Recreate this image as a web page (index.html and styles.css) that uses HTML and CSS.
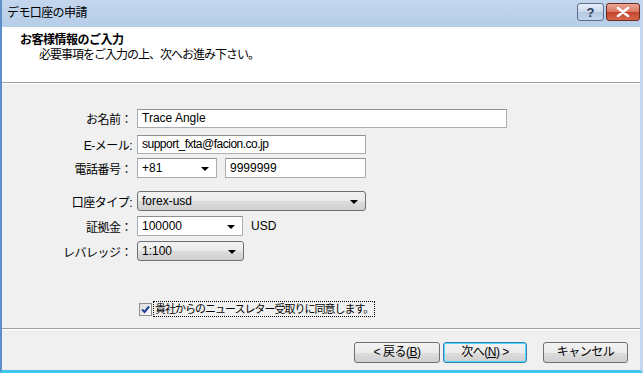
FILE: index.html
```html
<!DOCTYPE html>
<html lang="ja">
<head>
    <meta charset="UTF-8">
    <title>デモ口座の申請</title>
    <link rel="stylesheet" href="styles.css">
</head>
<body>
    <div class="window">
        <div class="titlebar">
            <span class="title">デモ口座の申請</span>
            <div class="caption-buttons">
                <span class="cap-btn help">?</span>
                <span class="cap-btn close">
                    <svg viewBox="0 0 14 10" width="14" height="10"><path d="M2 1 L12 9 M12 1 L2 9" stroke="#fff" stroke-width="2.6" stroke-linecap="round"/></svg>
                </span>
            </div>
        </div>

        <div class="header">
            <h1 class="header-title">お客様情報のご入力</h1>
            <p class="header-sub">必要事項をご入力の上、次へお進み下さい。</p>
        </div>

        <div class="content">
            <div class="form">
                <div class="row r-name">
                    <label class="label">お名前：</label>
                    <div class="textbox w-name">Trace Angle</div>
                </div>
                <div class="row r-mail">
                    <label class="label">E-メール:</label>
                    <div class="textbox w-mail">support_fxta@facion.co.jp</div>
                </div>
                <div class="row r-tel">
                    <label class="label">電話番号：</label>
                    <div class="combo w-code">+81<span class="arrow"></span></div>
                    <div class="textbox w-tel">9999999</div>
                </div>
                <div class="row r-type">
                    <label class="label">口座タイプ:</label>
                    <div class="dropdown w-type">forex-usd<span class="arrow"></span></div>
                </div>
                <div class="row r-dep">
                    <label class="label">証拠金：</label>
                    <div class="combo w-dep">100000<span class="arrow"></span></div>
                    <span class="unit">USD</span>
                </div>
                <div class="row r-lev">
                    <label class="label">レバレッジ：</label>
                    <div class="dropdown w-lev">1:100<span class="arrow"></span></div>
                </div>
            </div>

            <div class="check-row">
                <span class="checkbox">
                    <svg viewBox="0 0 9 9" width="9" height="9"><path d="M1 4.5 L3.5 7 L8 1.5" fill="none" stroke="#1c3f94" stroke-width="2"/></svg>
                </span>
                <span class="check-label">貴社からのニュースレター受取りに同意します。</span>
            </div>
        </div>

        <div class="footer">
            <button class="btn back">&lt; 戻る(<u>B</u>)</button>
            <button class="btn next">次へ(<u>N</u>) &gt;</button>
            <button class="btn cancel">キャンセル</button>
        </div>
    </div>
</body>
</html>
```

FILE: styles.css
```css
* {
    margin: 0;
    padding: 0;
    box-sizing: border-box;
}

body {
    width: 643px;
    height: 373px;
    overflow: hidden;
    font-family: "Liberation Sans", "Noto Sans CJK JP", sans-serif;
    font-size: 12px;
    color: #000;
    background: #f0f0f0;
}

.window {
    width: 643px;
    height: 373px;
    display: flex;
    flex-direction: column;
    border-left: 2px solid #5f8fc8;
    border-right: 3px solid #c3d7ee;
    border-bottom: 3px solid #3ec6ee;
    background: #f0f0f0;
}

/* title bar */
.titlebar {
    height: 27px;
    display: flex;
    align-items: flex-start;
    justify-content: space-between;
    background: linear-gradient(#c3d6ed, #b6cde8);
}

.title {
    padding: 5px 0 0 5px;
    font-size: 12px;
    line-height: 16px;
    letter-spacing: -0.6px;
}

.caption-buttons {
    display: flex;
    gap: 2px;
    padding: 3px 0 0 0;
}

.cap-btn {
    height: 18px;
    border: 1px solid #5c6f8a;
    border-radius: 3px;
    display: flex;
    align-items: center;
    justify-content: center;
}

.help {
    width: 27px;
    background: linear-gradient(#e5eef8 0%, #cbdaec 50%, #b3c7e0 51%, #c4d6ec 100%);
    color: #2b3e5a;
    font-weight: bold;
    font-size: 13px;
}

.close {
    width: 34px;
    border-color: #6d2a1f;
    background: linear-gradient(#e9a796 0%, #d8765f 50%, #c2442b 51%, #d4664c 100%);
}

/* header */
.header {
    height: 56px;
    background: #fff;
    border-bottom: 1px solid #a0a0a0;
    box-shadow: 0 1px 0 #fff;
    padding: 6px 0 0 18px;
}

.header-title {
    font-size: 12px;
    font-weight: bold;
    line-height: 15px;
    letter-spacing: -0.5px;
}

.header-sub {
    font-size: 12px;
    line-height: 15px;
    padding-left: 19px;
    letter-spacing: -1px;
}

/* form */
.content {
    flex: 1;
    padding-top: 25px;
}

.form {
    display: flex;
    flex-direction: column;
}

.row {
    display: flex;
    align-items: center;
    height: 20px;
    gap: 5px;
}

.r-mail { margin-top: 6px; }
.r-tel { margin-top: 4px; }
.r-type { margin-top: 13px; }
.r-dep { margin-top: 5px; }
.r-lev { margin-top: 5px; }

.label {
    width: 130px;
    text-align: right;
    white-space: nowrap;
    letter-spacing: -0.5px;
}

.textbox,
.combo {
    position: relative;
    height: 19px;
    background: #fff;
    border: 1px solid #abadb3;
    border-top-color: #8e8f8f;
    padding: 0 4px;
    line-height: 17px;
    white-space: nowrap;
}

.combo {
    height: 20px;
    line-height: 18px;
    padding-left: 4px;
}

.dropdown {
    position: relative;
    height: 20px;
    border: 1px solid #707070;
    border-radius: 3px;
    background: linear-gradient(#f2f2f2 0%, #ebebeb 50%, #dddddd 51%, #cfcfcf 100%);
    padding: 0 4px;
    line-height: 18px;
    white-space: nowrap;
}

.arrow {
    position: absolute;
    right: 7px;
    top: 8px;
    width: 0;
    height: 0;
    border-left: 4px solid transparent;
    border-right: 4px solid transparent;
    border-top: 4px solid #000;
}

.w-name { width: 370px; }
.w-mail { width: 229px; letter-spacing: -0.5px; }
.w-code { width: 80px; }
.w-tel { width: 141px; margin-left: 3px; height: 20px; line-height: 18px; }
.w-type { width: 229px; }
.w-dep { width: 106px; }
.w-lev { width: 107px; }

.unit {
    margin-left: 3px;
}

/* newsletter */
.check-row {
    display: flex;
    align-items: center;
    margin: 40px 0 0 137px;
    height: 16px;
}

.checkbox {
    width: 13px;
    height: 13px;
    border: 1px solid #8f8f8f;
    background: linear-gradient(135deg, #dcdcdc, #fbfbfb);
    display: flex;
    align-items: center;
    justify-content: center;
}

.check-label {
    margin-left: 1px;
    padding: 0 1px;
    font-size: 11px;
    line-height: 14px;
    border: 1px dotted #000;
    letter-spacing: -1px;
}

/* footer */
.footer {
    height: 42px;
    border-top: 1px solid #a0a0a0;
    box-shadow: inset 0 1px 0 #fff;
    display: flex;
    align-items: flex-start;
    padding: 13px 0 0 352px;
}

.btn {
    height: 21px;
    font-family: "Liberation Sans", "Noto Sans CJK JP", sans-serif;
    font-size: 12px;
    color: #000;
    border: 1px solid #707070;
    border-radius: 3px;
    background: linear-gradient(#f2f2f2 0%, #ebebeb 50%, #dddddd 51%, #cfcfcf 100%);
    line-height: 17px;
    letter-spacing: -0.5px;
}

.btn u {
    text-decoration: underline;
}

.back { width: 86px; }

.next {
    width: 84px;
    margin-left: 3px;
    border-color: #3c7fb1;
    box-shadow: inset 0 0 0 1px #48d8fb;
}

.cancel {
    width: 85px;
    margin-left: 16px;
}
```
